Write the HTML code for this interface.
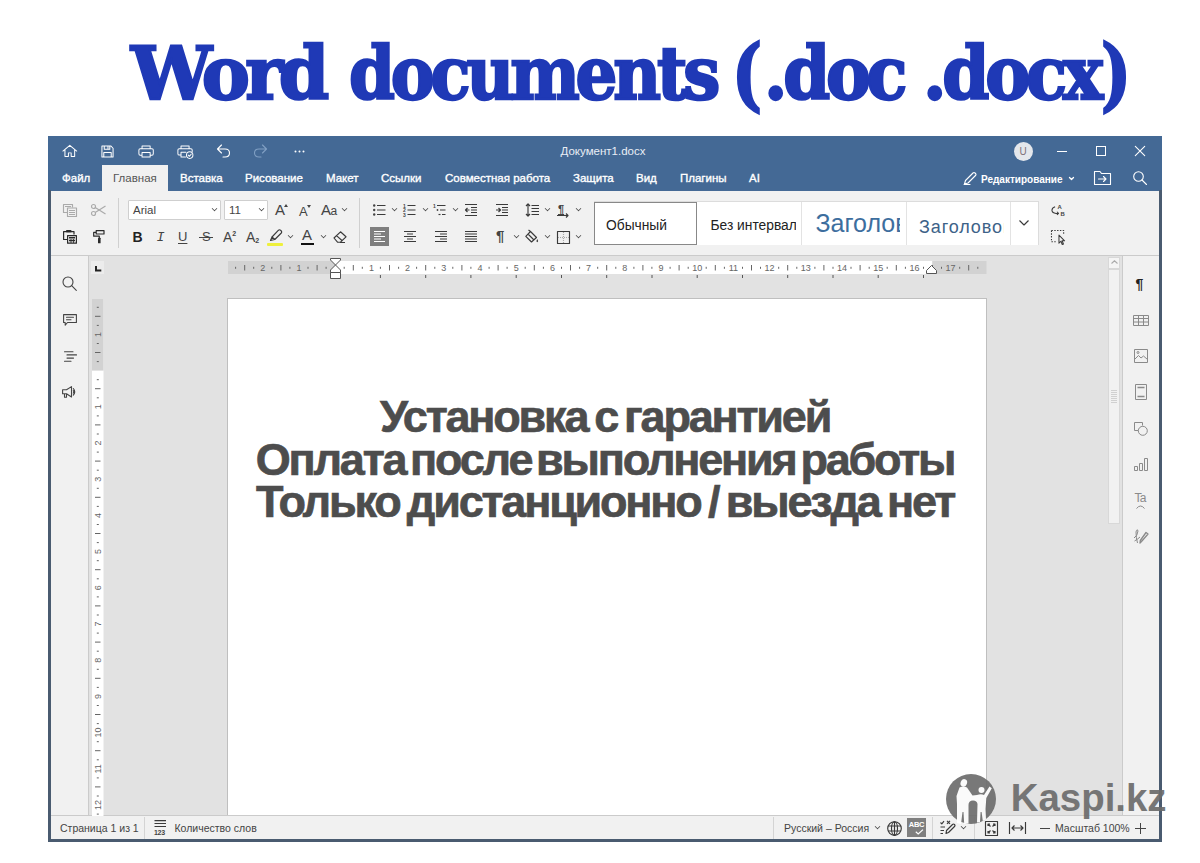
<!DOCTYPE html>
<html lang="ru">
<head>
<meta charset="utf-8">
<title>Word documents</title>
<style>
*{box-sizing:border-box;margin:0;padding:0}
html,body{width:1200px;height:863px;overflow:hidden;background:#fff}
body{position:relative;font-family:"Liberation Sans",sans-serif;font-size:11px;color:#444}
.abs{position:absolute}
#title{position:absolute;left:0;top:0;width:1200px;height:130px}
#title span{position:absolute;top:28px;white-space:nowrap;font-family:"DejaVu Serif","Liberation Serif",serif;font-weight:700;font-size:73px;line-height:90px;color:#1f39b6;letter-spacing:-4.6px;-webkit-text-stroke:2.4px #1f39b6;transform-origin:0 0}
#hdr{position:absolute;left:48px;top:136px;width:1114px;height:55px;background:#446995}
#tb{position:absolute;left:50px;top:191px;width:1110px;height:65px;background:#f1f1f1;border-bottom:1px solid #cbcbcb}
#canvas{position:absolute;left:50px;top:256px;width:1110px;height:560px;background:#e2e2e2}
#lside{position:absolute;left:50px;top:256px;width:38.5px;height:560px;background:#f1f1f1;border-right:1px solid #cbcbcb}
#rside{position:absolute;left:1121.5px;top:256px;width:38.5px;height:560px;background:#f1f1f1;border-left:1px solid #cbcbcb}
#sb{position:absolute;left:50px;top:815.4px;width:1110px;height:23.8px;background:#f1f1f1;border-top:1px solid #cbcbcb}
#page{position:absolute;left:227px;top:298px;width:760px;height:518px;background:#fff;border:1px solid #bfbfbf;border-bottom:0}
.bl{position:absolute;left:48px;top:190px;width:2.7px;height:651.5px;background:#4a5b70}
.br{position:absolute;left:1159.2px;top:190px;width:2.6px;height:651.5px;background:#4a5b70}
.bb{position:absolute;left:48px;top:839.2px;width:1113.8px;height:2.5px;background:#4a5b70}
svg{position:absolute;overflow:visible}
.hi{fill:none;stroke:#fff;stroke-width:1.1;stroke-linejoin:round;stroke-linecap:round}
.tab{position:absolute;top:171px;height:14px;line-height:14px;font-size:11.5px;color:#fff;white-space:nowrap;-webkit-text-stroke:.35px #fff}
#tabact{position:absolute;left:102px;top:165px;width:66px;height:27px;background:#f1f1f1}
#tabact span{position:absolute;left:11px;top:6px;line-height:14px;font-size:11.5px;color:#555}
#doct{position:absolute;left:503px;top:144px;width:200px;text-align:center;line-height:14px;font-size:11.5px;color:#e9eef5;white-space:nowrap}
.ti{fill:none;stroke:#3a3a3a;stroke-width:1.15;stroke-linejoin:round;stroke-linecap:butt}
.tf{fill:#444;stroke:none}
.dis .ti{stroke:#aaa}
.cv{position:absolute;width:5px;height:5px;border-right:1.3px solid #444;border-bottom:1.3px solid #444;transform:rotate(45deg) scale(.8)}
.sep{position:absolute;top:198px;width:1px;height:50px;background:#d0d0d0}
.cb{position:absolute;top:200px;height:20px;background:#fff;border:1px solid #cfcfcf;border-radius:1px;font-size:11.5px;line-height:18px;color:#444;padding-left:4px}
.tl{position:absolute;white-space:nowrap;color:#444;font-size:14px;line-height:16px}
.gal{position:absolute;top:201.6px;height:43px;background:#fff;overflow:hidden;white-space:nowrap}
.gal span{position:absolute;white-space:nowrap}
.clip{position:absolute;left:0;top:0;height:43px;overflow:hidden}
.si{fill:none;stroke:#444;stroke-width:1.1;stroke-linejoin:round;stroke-linecap:round}
.sg{fill:none;stroke:#8a8a8a;stroke-width:1;stroke-linejoin:round}
.st{position:absolute;top:821px;line-height:14px;font-size:10.5px;color:#444;white-space:nowrap}
.ssep{position:absolute;top:817px;width:1px;height:22px;background:#d4d4d4}
.doc{position:absolute;left:226px;width:758px;text-align:center;font-weight:700;font-size:45px;line-height:50px;color:#4d4d4d;letter-spacing:-2.2px;word-spacing:-5px;white-space:nowrap;-webkit-text-stroke:.7px #4d4d4d}
</style>
</head>
<body>
<div id="title"><span id="t1" style="left:131px;transform:scaleX(.989)">Word</span><span id="t2" style="left:349px;transform:scaleX(.901)">documents</span><span id="t3" style="left:732px;top:23.5px;transform:scale(.87,1.08)">(</span><span id="t4" style="left:763.8px;transform:scaleX(.921)">.doc</span><span id="t5" style="left:923px;transform:scaleX(.926)">.docx</span><span id="t6" style="left:1100.5px;top:23.5px;transform:scale(.87,1.08)">)</span></div>
<div id="hdr"></div>
<div id="tb"></div>
<div id="canvas"></div>
<div id="lside"></div>
<div id="page"></div>
<div id="rside"></div>
<div id="sb"></div>
<!-- header row 1 icons -->
<svg style="left:61.8px;top:144.2px" width="15.6" height="14.2" viewBox="0 0 17 16" preserveAspectRatio="none"><path class="hi" d="M1 8 L8.5 1.5 L16 8 M3.2 6.5 V14 H7 V10 H10 V14 H13.8 V6.5"/></svg>
<svg style="left:101px;top:145px" width="13" height="13" viewBox="0 0 14 14"><path class="hi" d="M1 1 H10.5 L13 3.5 V13 H1 Z M3.5 1 V4.5 H9.5 V1 M3 13 V8 H11 V13 M7.5 2 V3.5"/></svg>
<svg style="left:138.3px;top:145px" width="16.2" height="13" viewBox="0 0 18 14" preserveAspectRatio="none"><path class="hi" d="M4.5 4 V1 H13.5 V4 M4.5 11 H2.5 Q1 11 1 9.5 V5.5 Q1 4 2.5 4 H15.500000000000002 Q17 4 17 5.5 V9.5 Q17 11 15.5 11 H13.5 M4.500000000000001 8 H13.5 V13 H4.5 Z"/></svg>
<svg style="left:176.5px;top:145px" width="17" height="13.8" viewBox="0 0 19 15" preserveAspectRatio="none"><path class="hi" d="M4.5 4 V1 H13.5 V4 M4.5 11 H2.5 Q1 11 1 9.5 V5.5 Q1 4 2.5 4 H15.500000000000002 Q17 4 17 5.5 V7 M4.500000000000001 8 H10 M4.5 8 V13 H9.5"/><circle class="hi" cx="14.2" cy="11" r="3.6"/><path class="hi" d="M12.5 11 L13.8 12.3 L16 9.8"/></svg>
<svg style="left:216px;top:144px" width="15" height="14" viewBox="0 0 15 14"><path class="hi" d="M5.5 1 L1.5 5 L5.5 9 M1.5 5 H9 Q13.5 5 13.5 9 Q13.5 13 9 13 H7"/></svg>
<svg style="left:253px;top:144px" width="15" height="14" viewBox="0 0 15 14"><path class="hi" style="stroke:#809fc3" d="M9.5 1 L13.5 5 L9.5 9 M13.5 5 H6 Q1.5 5 1.5 9 Q1.5 13 6 13 H8"/></svg>
<svg style="left:294px;top:150px" width="11" height="3" viewBox="0 0 11 3"><circle cx="1.5" cy="1.5" r="1" fill="#fff"/><circle cx="5.5" cy="1.5" r="1" fill="#fff"/><circle cx="9.5" cy="1.5" r="1" fill="#fff"/></svg>
<div id="doct">Документ1.docx</div>
<div style="position:absolute;left:1013.5px;top:142px;width:19px;height:19px;border-radius:50%;background:#e4e7ec;color:#7d7078;font-size:10px;line-height:19px;text-align:center">U</div>
<div style="position:absolute;left:1057px;top:151px;width:9.5px;height:1px;background:#fff"></div>
<div style="position:absolute;left:1096px;top:146px;width:10px;height:10px;border:1px solid #fff"></div>
<svg style="left:1134.5px;top:146px" width="10" height="10" viewBox="0 0 10 10"><path class="hi" d="M.3 .3 L9.7 9.7 M9.7 .3 L.3 9.7"/></svg>
<!-- tabs -->
<div class="tab" style="left:62px">Файл</div>
<div id="tabact"><span>Главная</span></div>
<div class="tab" style="left:180px">Вставка</div>
<div class="tab" style="left:245px">Рисование</div>
<div class="tab" style="left:326px">Макет</div>
<div class="tab" style="left:381px">Ссылки</div>
<div class="tab" style="left:445px">Совместная работа</div>
<div class="tab" style="left:573px">Защита</div>
<div class="tab" style="left:636px">Вид</div>
<div class="tab" style="left:680px">Плагины</div>
<div class="tab" style="left:749px">AI</div>
<svg style="left:963px;top:171px" width="15" height="14" viewBox="0 0 15 14"><path class="hi" d="M2.5 9.5 L10 2 Q11 1 12 2 L12.5 2.500000000000001 Q13.5 3.5 12.5 4.5 L5 12 L1.5 13 Z M1 13.5 H7"/></svg>
<div class="tab" style="left:981px;top:172.5px;font-size:10px;font-weight:700;-webkit-text-stroke:0">Редактирование</div>
<svg style="left:1068.5px;top:176.5px" width="5" height="4" viewBox="0 0 5 4"><path class="hi" style="stroke-width:1.3" d="M.5 .5 L2.5 2.5 L4.5 .5"/></svg>
<svg style="left:1094px;top:171px" width="17" height="14" viewBox="0 0 17 14"><path class="hi" d="M.5 .5 H6 L7.5 2.5 H16.5 V13.5 H.5 Z M4.500000000000001 8 H12 M9.5 5.5 L12 8 L9.5 10.5"/></svg>
<svg style="left:1133px;top:171px" width="14" height="14" viewBox="0 0 14 14"><circle class="hi" cx="5.5" cy="5.5" r="4.8"/><path class="hi" d="M9 9 L13.5 13.5"/></svg>

<!-- toolbar -->
<svg class="dis" style="left:63px;top:204px" width="14" height="13" viewBox="0 0 14 13"><path class="ti" d="M4 8.5 H.5 V.5 H9.5 V3.5 M2 2.500000000000001 H8"/><path class="ti" d="M4.5 4 H13.5 V12.5 H4.5 Z M6 6.5 H12 M6 8.5 H12 M6 10.5 H12"/></svg>
<svg class="dis" style="left:91px;top:204px" width="15" height="12" viewBox="0 0 15 12"><circle class="ti" cx="2.5" cy="2.5" r="2"/><circle class="ti" cx="2.5" cy="9.5" r="2"/><path class="ti" d="M4.2 3.5 L14.5 10 M4.2 8.5 L14.5 2"/></svg>
<svg style="left:63px;top:230px" width="14" height="14" viewBox="0 0 14 14"><path class="ti" style="stroke:#2a2a2a;stroke-width:1.2" d="M3.5 1.6 H.6 V9.5 H4 M8 1.6 H11 V4.5"/><rect style="fill:#2a2a2a" x="3" y="0" width="5.5" height="2.6" rx=".8"/><path class="ti" style="stroke:#2a2a2a;stroke-width:1.2" d="M4.6 5.600000000000001 H13.4 V13.2 H4.6 Z"/><path class="ti" style="stroke:#2a2a2a;stroke-width:1.5" d="M6 7.8 H12 M6 10.600000000000001 H12"/><path class="ti" style="stroke:#2a2a2a;stroke-width:.8" d="M8 9 V13 M10.5 9 V13"/></svg>
<svg style="left:92.5px;top:230px" width="12" height="14" viewBox="0 0 12 14"><path class="ti" style="stroke:#2a2a2a;stroke-width:1.2" d="M3.2 .6 H11 V4 H3.2 Z M3.2 2.300000000000001 H.7 V6.200000000000001 H6.3 V8"/><rect style="fill:#2a2a2a" x="5" y="7.8" width="2.6" height="5.4" rx=".5"/></svg>
<div class="sep" style="left:118px"></div>
<div class="cb" style="left:128px;width:93px">Arial</div><div class="cv" style="left:211.5px;top:206px"></div>
<div class="cb" style="left:224px;width:44px">11</div><div class="cv" style="left:258.5px;top:206px"></div>
<div class="tl" style="left:275px;top:202px;font-size:15px">A</div><svg style="left:284px;top:204px" width="4" height="3" viewBox="0 0 4 3"><path class="tf" d="M0 3 L2 0 L4 3Z"/></svg>
<div class="tl" style="left:299px;top:204px;font-size:13px">A</div><svg style="left:307px;top:205px" width="4" height="3" viewBox="0 0 4 3"><path class="tf" d="M0 0 L2 3 L4 0Z"/></svg>
<div class="tl" style="left:321px;top:202px;font-size:15px;letter-spacing:-.5px">A<span style="font-size:12px">a</span></div><div class="cv" style="left:341.5px;top:206px"></div>
<div class="tl" style="left:132.5px;top:229px;font-size:14px;font-weight:700;color:#222">B</div>
<div class="tl" style="left:156.5px;top:229.6px;font-size:13.5px;font-style:italic;font-family:'Liberation Mono',monospace;letter-spacing:0">I</div>
<div class="tl" style="left:178px;top:229px;font-size:13px;text-decoration:underline;text-underline-offset:2px">U</div>
<div class="tl" style="left:202px;top:229px;font-size:13px">S</div><div class="abs" style="left:199px;top:237px;width:14px;height:1px;background:#444"></div>
<div class="tl" style="left:223px;top:229px;font-size:14px">A<span style="font-size:7px;position:relative;top:-6px;font-weight:700">2</span></div>
<div class="tl" style="left:246px;top:229px;font-size:14px">A<span style="font-size:7px;position:relative;top:1px;font-weight:700">2</span></div>
<svg style="left:269px;top:229px" width="14" height="12" viewBox="0 0 14 12"><path class="ti" d="M3 8 L9.5 1.2 Q10.5 .3 11.5 1.2 L12.3 2 Q13.2 3 12.3 4 L5.8 10.5 Z M3 8 L1.5 11.5 L5.8 10.5"/></svg>
<div class="abs" style="left:267px;top:243px;width:16px;height:3px;background:#eef03c;border-radius:1px"></div><div class="cv" style="left:288.0px;top:233px"></div>
<div class="tl" style="left:302px;top:227px;font-size:15px">A</div>
<div class="abs" style="left:301px;top:243px;width:13px;height:2px;background:#111"></div><div class="cv" style="left:320.5px;top:233px"></div>
<svg style="left:333px;top:231px" width="14" height="12" viewBox="0 0 14 12"><path class="ti" d="M1 7 L7.5 .8 L13 5.800000000000001 L7.5 11.2 H4.5 Z M3.5 4.6000000000000005 L9.5 10 M7 11.5 H12"/></svg>
<div class="sep" style="left:359px"></div>
<!-- para row1 -->
<svg style="left:373px;top:204px" width="13" height="12" viewBox="0 0 13 12"><circle class="tf" cx="1.2" cy="1.5" r="1.2"/><circle class="tf" cx="1.2" cy="6" r="1.2"/><circle class="tf" cx="1.2" cy="10.5" r="1.2"/><path class="ti" d="M4 1.5 H12.5 M4 6 H12.5 M4 10.5 H12.5"/></svg><div class="cv" style="left:391.5px;top:206px"></div>
<svg style="left:403px;top:204px" width="13" height="12" viewBox="0 0 13 12"><path class="ti" d="M4.5 1.5 H12.5 M4.500000000000001 6 H12.5 M4.5 10.5 H12.5"/><text x="0" y="3.5" font-size="5" font-weight="700" fill="#444" font-family="Liberation Sans, sans-serif">1</text><text x="0" y="8" font-size="5" font-weight="700" fill="#444" font-family="Liberation Sans, sans-serif">2</text><text x="0" y="12.5" font-size="5" font-weight="700" fill="#444" font-family="Liberation Sans, sans-serif">3</text></svg><div class="cv" style="left:422.5px;top:206px"></div>
<svg style="left:433px;top:204px" width="13" height="12" viewBox="0 0 13 12"><path class="ti" d="M4 1.5 H12.5 M7 6 H12.5 M9 10.5 H12.5"/><text x="0" y="3.5" font-size="5" font-weight="700" fill="#444" font-family="Liberation Sans, sans-serif">1</text><circle class="tf" cx="4.5" cy="6" r=".9"/><path class="ti" d="M5.5 10.5 H7.5"/></svg><div class="cv" style="left:453.0px;top:206px"></div>
<svg style="left:465px;top:204px" width="12" height="12" viewBox="0 0 12 12"><path class="ti" d="M0 .5 H12 M6 3.5 H12 M6 6 H12 M6 8.5 H12 M0 11.5 H12 M.5 6 H4.5 M2.5 4 L.5 6 L2.5 8"/></svg>
<svg style="left:495.5px;top:204px" width="12" height="12" viewBox="0 0 12 12"><path class="ti" d="M0 .5 H12 M6 3.5 H12 M6 6 H12 M6 8.5 H12 M0 11.5 H12 M0 6 H4.5 M2.500000000000001 4 L4.5 6 L2.5 8"/></svg>
<svg style="left:526px;top:203px" width="13" height="14" viewBox="0 0 13 14"><path class="ti" d="M5.5 2.500000000000001 H13 M5.5 5.5 H13 M5.5 8.5 H13 M5.5 11.5 H13 M2 1 V13 M0 3 L2 .8 L4 3 M0 11 L2 13.2 L4 11"/></svg><div class="cv" style="left:544.5px;top:206px"></div>
<div class="tl" style="left:558px;top:201px;font-size:11px;font-weight:700;text-decoration:underline;text-underline-offset:1px">¶</div>
<svg style="left:557px;top:213px" width="12" height="5" viewBox="0 0 12 5"><path class="ti" d="M0 2.5 H11 M9 .5 L11 2.5 L9 4.5"/></svg><div class="cv" style="left:575.5px;top:206px"></div>
<!-- para row2 -->
<div class="abs" style="left:370px;top:227px;width:19px;height:19px;background:#7f7f7f"></div>
<svg style="left:374px;top:231px" width="12" height="12" viewBox="0 0 12 12"><path class="ti" style="stroke:#fff" d="M0 .5 H11 M0 3 H7 M0 5.5 H11 M0 8 H7 M0 10.5 H11"/></svg>
<svg style="left:404px;top:231px" width="12" height="12" viewBox="0 0 12 12"><path class="ti" d="M0 .5 H12 M3 3 H9 M0 5.5 H12 M3 8 H9 M0 10.5 H12"/></svg>
<svg style="left:434.5px;top:231px" width="12" height="12" viewBox="0 0 12 12"><path class="ti" d="M0 .5 H12 M5 3 H12 M0 5.5 H12 M5 8 H12 M0 10.5 H12"/></svg>
<svg style="left:465px;top:231px" width="12" height="12" viewBox="0 0 12 12"><path class="ti" d="M0 .5 H12 M0 3 H12 M0 5.5 H12 M0 8 H12 M0 10.5 H12"/></svg>
<div class="tl" style="left:496px;top:228px;font-size:15px;font-weight:700">¶</div><div class="cv" style="left:514.0px;top:233px"></div>
<svg style="left:525px;top:230px" width="14" height="13" viewBox="0 0 14 13"><path class="ti" d="M5.5 1.5 L11.5 7.5 L6.5 12 L.8 6.3 Z M5.5 1.5 L3.5 0 M3 4 L8.5 9.5"/><path class="tf" d="M12.3 9 Q14 11.5 12.300000000000002 12.3 Q10.600000000000001 11.5 12.3 9Z"/></svg><div class="cv" style="left:544.5px;top:233px"></div>
<svg style="left:557px;top:231px" width="13" height="13" viewBox="0 0 13 13"><rect class="ti" x=".5" y=".5" width="12" height="12"/><path class="ti" style="stroke:#aaa;stroke-dasharray:1 1" d="M6.5 1 V12 M1 6.5 H12"/></svg><div class="cv" style="left:575.5px;top:233px"></div>
<!-- gallery -->
<div class="abs" style="left:593.5px;top:201px;width:445px;height:44.2px;background:#fff;border:1px solid #dcdcdc"></div>
<div class="gal" style="left:594px;width:103px;border:1.5px solid #888"><span style="left:11px;top:13px;font-size:13.8px;color:#222;line-height:20px">Обычный</span></div>
<div class="gal" style="left:697px;width:105px;border-right:1px solid #e3e3e3"><div class="clip" style="width:99px"><span style="left:13.5px;top:14.5px;font-size:13.8px;color:#222;line-height:20px">Без интервала</span></div></div>
<div class="gal" style="left:802px;width:104.5px;border-right:1px solid #e3e3e3"><div class="clip" style="width:97.5px"><span style="left:13.5px;top:6.5px;font-size:25px;color:#3d6e9e;line-height:30px">Заголовок 1</span></div></div>
<div class="gal" style="left:906.5px;width:104.5px;border-right:1px solid #e3e3e3"><div class="clip" style="width:97px"><span style="left:12.5px;top:13.5px;font-size:18px;letter-spacing:.9px;color:#3d6288;line-height:24px">Заголовок 2</span></div></div>
<div class="gal" style="left:1011px;width:27px"></div>
<svg style="left:1018.5px;top:219.5px" width="10" height="6" viewBox="0 0 10 6"><path class="ti" d="M.5 .5 L5 5 L9.5 .5"/></svg>
<svg style="left:1050.5px;top:203.6px" width="14.6" height="12.8" viewBox="0 0 16 14"><text x="7" y="5" font-size="6.5" font-weight="700" fill="#444" font-family="Liberation Sans, sans-serif">A</text><text x="10.5" y="13" font-size="6.5" font-weight="700" fill="#444" font-family="Liberation Sans, sans-serif">B</text><path class="ti" style="stroke-width:1.1" d="M4.5 3 Q1 4 1 7 Q1.5 10 5.5 10.3 H8 M6.5 8.5 L8.3 10.3 L6.5 12"/></svg>
<svg style="left:1050.5px;top:229.7px" width="15" height="15" viewBox="0 0 16 16"><path class="ti" style="stroke-dasharray:1.5 1.5" d="M.5 .5 H13.5 V5 M.5 .5 V12.5 H6"/><path class="ti" style="stroke-width:1.1" d="M8.5 5.5 V14 L10.5 12 L12 15.5 L13.3 15 L11.8 11.5 H14.5 Z"/></svg>

<!--CANVAS-->
<svg style="left:227.5px;top:260.7px" width="758.5" height="13" viewBox="0 0 758.5 13">
<rect x="0" y="0" width="758.5" height="13" fill="#d2d2d2"/>
<rect x="107.2" y="0" width="597.0" height="13" fill="#fff"/>
<path d="M7.6 5.8 V7.8 M16.7 4 V9.5 M25.7 5.8 V7.8 M43.8 5.8 V7.8 M52.9 4 V9.5 M61.9 5.8 V7.8 M80.0 5.8 V7.8 M89.1 4 V9.5 M98.1 5.8 V7.8 M116.2 5.8 V7.8 M125.3 4 V9.5 M134.3 5.8 V7.8 M152.4 5.8 V7.8 M161.5 4 V9.5 M170.6 5.8 V7.8 M188.6 5.8 V7.8 M197.7 4 V9.5 M206.8 5.8 V7.8 M224.8 5.8 V7.8 M233.9 4 V9.5 M242.9 5.8 V7.8 M261.1 5.8 V7.8 M270.1 4 V9.5 M279.1 5.8 V7.8 M297.2 5.8 V7.8 M306.3 4 V9.5 M315.4 5.8 V7.8 M333.5 5.8 V7.8 M342.5 4 V9.5 M351.6 5.8 V7.8 M369.7 5.8 V7.8 M378.7 4 V9.5 M387.8 5.8 V7.8 M405.9 5.8 V7.8 M414.9 4 V9.5 M423.9 5.8 V7.8 M442.1 5.8 V7.8 M451.1 4 V9.5 M460.2 5.8 V7.8 M478.2 5.8 V7.8 M487.3 4 V9.5 M496.4 5.8 V7.8 M514.5 5.8 V7.8 M523.5 4 V9.5 M532.5 5.8 V7.8 M550.7 5.8 V7.8 M559.7 4 V9.5 M568.8 5.8 V7.8 M586.9 5.8 V7.8 M595.9 4 V9.5 M605.0 5.8 V7.8 M623.0 5.8 V7.8 M632.1 4 V9.5 M641.2 5.8 V7.8 M659.2 5.8 V7.8 M668.3 4 V9.5 M677.4 5.8 V7.8 M695.5 5.8 V7.8 M704.5 4 V9.5 M713.5 5.8 V7.8 M731.7 5.8 V7.8 M740.7 4 V9.5 M749.8 5.8 V7.8" stroke="#666" stroke-width="1" fill="none"/>
<g font-family="Liberation Sans, sans-serif" font-size="9" fill="#666"><text x="34.8" y="9.8" text-anchor="middle">2</text><text x="71.0" y="9.8" text-anchor="middle">1</text><text x="143.4" y="9.8" text-anchor="middle">1</text><text x="179.6" y="9.8" text-anchor="middle">2</text><text x="215.8" y="9.8" text-anchor="middle">3</text><text x="252.0" y="9.8" text-anchor="middle">4</text><text x="288.2" y="9.8" text-anchor="middle">5</text><text x="324.4" y="9.8" text-anchor="middle">6</text><text x="360.6" y="9.8" text-anchor="middle">7</text><text x="396.8" y="9.8" text-anchor="middle">8</text><text x="433.0" y="9.8" text-anchor="middle">9</text><text x="469.2" y="9.8" text-anchor="middle">10</text><text x="505.4" y="9.8" text-anchor="middle">11</text><text x="541.6" y="9.8" text-anchor="middle">12</text><text x="577.8" y="9.8" text-anchor="middle">13</text><text x="614.0" y="9.8" text-anchor="middle">14</text><text x="650.2" y="9.8" text-anchor="middle">15</text><text x="686.4" y="9.8" text-anchor="middle">16</text><text x="722.6" y="9.8" text-anchor="middle">17</text></g>
</svg>
<svg style="left:227.5px;top:274.5px" width="758.5" height="4" viewBox="0 0 758.5 4"><path d="M152.4 0 V3 M197.7 0 V3 M242.9 0 V3 M288.2 0 V3 M333.5 0 V3 M378.7 0 V3 M424.0 0 V3 M469.2 0 V3 M514.5 0 V3 M559.7 0 V3 M605.0 0 V3 M650.2 0 V3 M695.5 0 V3" stroke="#555" stroke-width="1" fill="none"/></svg>
<svg style="left:329.7px;top:258px" width="11" height="21" viewBox="0 0 11 21"><path d="M.5 .5 H10.5 V2 L5.5 7 L.5 2 Z M5.5 7 L10.5 12 V14.5 H.5 V12 Z M.5 14.5 H10.5 V20.5 H.5 Z" fill="#fff" stroke="#555" stroke-width="1" stroke-linejoin="round"/></svg>
<svg style="left:926.2px;top:264.5px" width="11" height="9" viewBox="0 0 11 9"><path d="M5.5 .5 L10.5 5.5 V8.5 H.5 V5.5 Z" fill="#fff" stroke="#555" stroke-width="1" stroke-linejoin="round"/></svg>
<svg style="left:92px;top:299px" width="11.5" height="517" viewBox="0 0 11.5 517">
<rect x="0" y="0" width="11.5" height="517" fill="#fff"/>
<rect x="0" y="0" width="11.5" height="71.6" fill="#d2d2d2"/>
<path d="M4.8 8.3 H6.8 M3 17.3 H8.5 M4.8 26.4 H6.8 M4.8 44.5 H6.8 M3 53.5 H8.5 M4.8 62.6 H6.8 M4.8 80.7 H6.8 M3 89.7 H8.5 M4.8 98.8 H6.8 M4.8 116.9 H6.8 M3 125.9 H8.5 M4.8 135.0 H6.8 M4.8 153.1 H6.8 M3 162.1 H8.5 M4.8 171.2 H6.8 M4.8 189.3 H6.8 M3 198.3 H8.5 M4.8 207.4 H6.8 M4.8 225.5 H6.8 M3 234.5 H8.5 M4.8 243.6 H6.8 M4.8 261.7 H6.8 M3 270.7 H8.5 M4.8 279.8 H6.8 M4.8 297.9 H6.8 M3 306.9 H8.5 M4.8 316.0 H6.8 M4.8 334.1 H6.8 M3 343.1 H8.5 M4.8 352.2 H6.8 M4.8 370.3 H6.8 M3 379.3 H8.5 M4.8 388.4 H6.8 M4.8 406.5 H6.8 M3 415.5 H8.5 M4.8 424.6 H6.8 M4.8 442.7 H6.8 M3 451.7 H8.5 M4.8 460.8 H6.8 M4.8 478.9 H6.8 M3 487.9 H8.5 M4.8 497.0 H6.8 M4.8 515.1 H6.8" stroke="#666" stroke-width="1" fill="none"/>
<g font-family="Liberation Sans, sans-serif" font-size="9" fill="#666"><text transform="translate(9,35.4) rotate(-90)" text-anchor="middle">1</text><text transform="translate(9,107.8) rotate(-90)" text-anchor="middle">1</text><text transform="translate(9,144.0) rotate(-90)" text-anchor="middle">2</text><text transform="translate(9,180.2) rotate(-90)" text-anchor="middle">3</text><text transform="translate(9,216.4) rotate(-90)" text-anchor="middle">4</text><text transform="translate(9,252.6) rotate(-90)" text-anchor="middle">5</text><text transform="translate(9,288.8) rotate(-90)" text-anchor="middle">6</text><text transform="translate(9,325.0) rotate(-90)" text-anchor="middle">7</text><text transform="translate(9,361.2) rotate(-90)" text-anchor="middle">8</text><text transform="translate(9,397.4) rotate(-90)" text-anchor="middle">9</text><text transform="translate(9,433.6) rotate(-90)" text-anchor="middle">10</text><text transform="translate(9,469.8) rotate(-90)" text-anchor="middle">11</text><text transform="translate(9,506.0) rotate(-90)" text-anchor="middle">12</text></g>
</svg>
<div class="abs" style="left:91px;top:260.5px;width:13px;height:13.5px;background:#ececec"></div>
<svg style="left:95px;top:265.7px" width="6" height="6" viewBox="0 0 6 6"><path d="M1 0 V4.5 H6.3" stroke="#222" stroke-width="2" fill="none"/></svg>
<!--/CANVAS-->
<div class="doc" id="l1" style="top:392px;word-spacing:-3.3px">Установка с гарантией</div>
<div class="doc" id="l2" style="top:434.5px;word-spacing:-5.5px">Оплата после выполнения работы</div>
<div class="doc" id="l3" style="top:477px;word-spacing:-2.9px">Только дистанционно / выезда нет</div>
<!-- left sidebar -->
<svg style="left:62px;top:276px" width="15" height="15" viewBox="0 0 15 15"><circle class="si" cx="6" cy="6" r="5"/><path class="si" d="M9.7 9.7 L14.3 14.3"/></svg>
<svg style="left:62.5px;top:313.5px" width="14" height="12" viewBox="0 0 14 12"><path class="si" d="M.6 .6 H13.4 V8.5 H4.5 L2.2 11.2 V8.5 H.6 Z M3.5 3.3 H10.5 M3.5 5.800000000000001 H8"/></svg>
<svg style="left:63.5px;top:350.5px" width="13" height="11" viewBox="0 0 13 11"><path class="si" d="M.5 .7 H9 M3 3.9 H12.5 M3 7.1 H9.5 M.5 10.3 H7"/></svg>
<svg style="left:62px;top:386px" width="15" height="12" viewBox="0 0 15 12"><path class="si" d="M.6 3.800000000000001 H4.5 L9.5 .6 V11 L4.5 7.800000000000001 H.6 Z M2.5 7.800000000000001 V11.3 H4.5 V7.800000000000001"/><path class="si" d="M11.3 2.5 Q14.2 5.800000000000001 11.3 9.200000000000001 M11.3 4.6 Q12.4 5.800000000000001 11.3 7"/></svg>
<!-- scrollbar -->
<div class="abs" style="left:1107.5px;top:256.5px;width:12.5px;height:12.5px;background:#f5f5f5;border:1px solid #d8d8d8"></div>
<svg style="left:1110.5px;top:260px" width="7" height="4" viewBox="0 0 7 4"><path d="M.5 3.5 L3.5 .8 L6.5 3.5" fill="none" stroke="#aaa" stroke-width="1.1"/></svg>
<div class="abs" style="left:1107.5px;top:269px;width:12.5px;height:255px;background:#f1f1f1;border:1px solid #d8d8d8"></div>
<svg style="left:1111px;top:390px" width="6" height="14" viewBox="0 0 6 14"><path d="M0 .5 H6 M0 2.5 H6 M0 4.5 H6 M0 6.5 H6 M0 8.5 H6 M0 10.5 H6 M0 12.5 H6" stroke="#d0d0d0" stroke-width="1" fill="none"/></svg>
<!-- right sidebar -->
<div class="abs" style="left:1135.5px;top:275.5px;font-size:14px;line-height:16px;font-weight:700;color:#222">¶</div>
<svg style="left:1133px;top:315px" width="16" height="11" viewBox="0 0 16 11"><path class="sg" d="M.5 .5 H15.5 V10.5 H.5 Z M.5 3.5 H15.5 M.5 7 H15.5 M5.5 .5 V10.5 M10.5 .5 V10.5"/></svg>
<svg style="left:1134px;top:349px" width="14" height="14" viewBox="0 0 14 14"><path class="sg" d="M.5 .5 H13.5 V13.5 H.5 Z M.5 10.5 L4.5 6.5 L7 9 L9.5 7 L13.5 10.5"/><circle class="sg" cx="4" cy="3.5" r="1"/></svg>
<svg style="left:1135px;top:384px" width="12" height="16" viewBox="0 0 12 16"><path class="sg" d="M.5 .5 H11.5 V15.5 H.5 Z"/><path class="sg" style="stroke-width:1.6" d="M2.5 3.5 H9.5 M2.5 12.5 H9.5"/></svg>
<svg style="left:1134px;top:422px" width="14" height="14" viewBox="0 0 14 14"><path class="sg" d="M4 8.5 H.5 V.5 H8.5 V3.5"/><circle class="sg" cx="8.800000000000001" cy="8.800000000000001" r="4.5"/></svg>
<svg style="left:1134px;top:458px" width="14" height="13" viewBox="0 0 14 13"><path class="sg" d="M.5 8.5 H3.5 V12.5 H.5 Z M5.5 5.5 H8.5 V12.5 H5.5 Z M10.5 .5 H13.5 V12.5 H10.5 Z"/></svg>
<div class="abs" style="left:1134.5px;top:491px;font-size:12px;line-height:14px;color:#8a8a8a;letter-spacing:-.8px">Ta</div>
<svg style="left:1136px;top:505px" width="9" height="4" viewBox="0 0 9 4"><path class="sg" d="M.5 3.5 Q4.5 -1.5 8.5 3.5"/></svg>
<svg style="left:1133px;top:529px" width="16" height="15" viewBox="0 0 16 15"><path class="sg" d="M1 9 Q4.500000000000001 7 5 2 Q4 -1 3 3 Q3 9 4.5 14 M1.5 12 Q5 10 7 8"/><path class="sg" style="stroke-width:1.3" d="M8.5 12.5 L7 14 L7.3 11.500000000000002 L13 3.5 L15 5 Z"/></svg>

<!-- status bar -->
<div class="st" style="left:60px">Страница 1 из 1</div>
<div class="ssep" style="left:144px"></div>
<svg style="left:154px;top:820px" width="13" height="15" viewBox="0 0 13 15"><path class="ti" d="M.5 .6 H12 M.5 3.5 H12 M.5 6.5 H12"/><text x="0" y="14.5" font-size="7" font-weight="700" fill="#444" font-family="Liberation Sans, sans-serif" letter-spacing="-.3">123</text></svg>
<div class="st" style="left:174.5px">Количество слов</div>
<div class="ssep" style="left:773px"></div>
<div class="st" style="left:784px">Русский – Россия</div><div class="cv" style="left:875.0px;top:824px"></div>
<svg style="left:886.5px;top:820.5px" width="15" height="15" viewBox="0 0 15 15"><circle class="ti" cx="7.5" cy="7.5" r="6.8"/><ellipse class="ti" cx="7.5" cy="7.5" rx="3" ry="6.8"/><path class="ti" d="M7.5 .7 V14.3 M1 5 H14 M1 10 H14"/></svg>
<div class="abs" style="left:906.8px;top:818px;width:19px;height:18.8px;background:#7f7f7f"></div>
<div class="abs" style="left:907px;top:820px;width:19px;text-align:center;font-size:7.5px;line-height:9px;color:#fff;font-weight:700;letter-spacing:-.2px">ABC</div>
<svg style="left:915px;top:829px" width="9" height="6" viewBox="0 0 9 6"><path d="M.8 2.800000000000001 L3.2 5 L8 .6" fill="none" stroke="#fff" stroke-width="1.2"/></svg>
<div class="ssep" style="left:932px"></div>
<svg style="left:940px;top:820px" width="17" height="15" viewBox="0 0 17 15"><path class="ti" d="M.5 2.500000000000001 L1.8 3.8 L4 1.2 M.5 7.000000000000001 H5 M.5 10.5 H4 M.5 13.5 H3"/><path class="ti" d="M7 .8 L10 3.800000000000001 M10 .8 L7 3.8"/><path class="ti" d="M6 13.5 L6.5 10.5 L12.5 4.5 Q13.5 3.5 14.5 4.5 Q15.5 5.5 14.5 6.500000000000001 L8.5 12.5 Z"/></svg><div class="cv" style="left:961.0px;top:824px"></div>
<div class="ssep" style="left:974px"></div>
<svg style="left:985px;top:820.5px" width="13" height="15" viewBox="0 0 13 15"><rect class="ti" x=".5" y=".5" width="12" height="14"/><path class="ti" d="M3 5 V3 H5 M8 3 H10 V5 M10 10 V12 H8 M5 12 H3 V10 M3 3 L5.5 5.5 M10 3 L7.5 5.5 M10 12 L7.5 9.5 M3 12 L5.5 9.500000000000002"/></svg>
<svg style="left:1009px;top:822px" width="17" height="12" viewBox="0 0 17 12"><path class="ti" d="M.5 0 V12 M16.5 0 V12 M3 6 H14 M5.5 3.5 L3 6 L5.5 8.5 M11.5 3.5 L14 6 L11.5 8.5"/></svg>
<div class="abs" style="left:1039.5px;top:827.5px;width:10px;height:1px;background:#444"></div>
<div class="st" style="left:1055px">Масштаб 100%</div>
<div class="abs" style="left:1134.5px;top:827.5px;width:11px;height:1px;background:#444"></div>
<div class="abs" style="left:1139.5px;top:822.5px;width:1px;height:11px;background:#444"></div>

<div class="bl"></div><div class="br"></div><div class="bb"></div>
<!-- watermark -->
<svg style="left:946px;top:773.7px" width="50" height="50" viewBox="0 0 50 50"><circle cx="25" cy="25" r="25" fill="#6c6c6c" fill-opacity=".92"/>
<g fill="#fff" fill-opacity=".96"><ellipse cx="17.8" cy="8.8" rx="3.2" ry="3.9" transform="rotate(20 17.8 8.8)"/><circle cx="35.5" cy="16" r="3"/><path d="M13.5 13.5 Q17.5 11.5 21 13.5 L26.5 21.5 L31 21 Q35 19.5 38 21 L43.5 12.5 L45.8 14.3 L40.3 24 L39.5 35 L40 45.5 L36.8 47 L35.6 38 L34.6 38 L34 48 L31 48.5 L31.5 30 Q31 26.5 27 26.5 Q22.5 26.5 22.5 31 L22.5 49.5 L18.2 50 L17.5 38 L16.5 38 L15 50 L11 49 L11 30 L10.5 22 Z"/></g></svg>
<div class="abs" style="left:1010.8px;top:774.5px;font-size:38.4px;line-height:46px;font-weight:700;color:#6c6c6c;opacity:.92;white-space:nowrap">Kaspi.kz</div>
</body>
</html>
